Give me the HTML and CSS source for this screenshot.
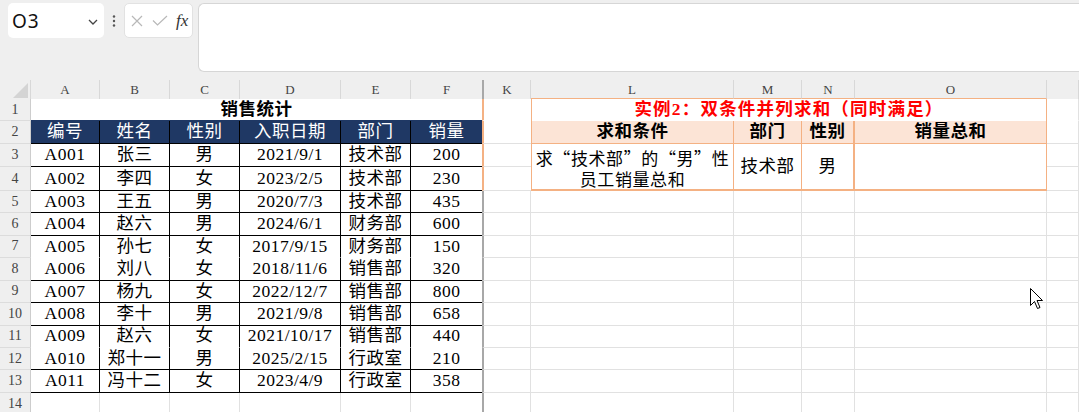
FILE: index.html
```html
<!DOCTYPE html>
<html lang="zh-CN">
<head>
    <meta charset="UTF-8">
    <title>销售统计</title>
    <link rel="stylesheet" href="styles.css">
</head>
<body>
    <div class="toolbar">
        <div class="namebox">
            <span class="ref">O3</span>
            <svg class="chev" width="10" height="6" viewBox="0 0 10 6"><path d="M1 1l4 4 4-4" fill="none" stroke="#444" stroke-width="1.3"/></svg>
        </div>
        <div class="kebab">
            <svg width="4" height="12" viewBox="0 0 4 12"><circle cx="2" cy="1.5" r="1.2" fill="#555"/><circle cx="2" cy="6" r="1.2" fill="#555"/><circle cx="2" cy="10.5" r="1.2" fill="#555"/></svg>
        </div>
        <div class="fxbox">
            <svg width="12" height="12" viewBox="0 0 12 12"><path d="M1 1l10 10M11 1L1 11" stroke="#b8b8b8" stroke-width="1.2"/></svg>
            <svg width="16" height="11" viewBox="0 0 16 11"><path d="M1 5.5l4.5 4.5L15 1" fill="none" stroke="#b8b8b8" stroke-width="1.2"/></svg>
            <span class="fx">fx</span>
        </div>
        <div class="formula"></div>
    </div>

    <table class="sheet">
        <colgroup>
            <col style="width:31px"><col style="width:69px"><col style="width:70px"><col style="width:70px">
            <col style="width:101px"><col style="width:70px"><col style="width:71px"><col style="width:49px">
            <col style="width:203px"><col style="width:68px"><col style="width:53px"><col style="width:192px">
            <col style="width:32px">
        </colgroup>
        <tr class="colhead">
            <th class="corner"><span class="tri"></span></th>
            <th>A</th><th>B</th><th>C</th><th>D</th><th>E</th><th class="f">F</th>
            <th class="k">K</th><th class="ro">L</th><th class="ro">M</th><th class="ro">N</th><th class="ro">O</th><th></th>
        </tr>
        <tr>
            <th class="rh">1</th>
            <td colspan="6" class="title">销售统计</td>
            <td class="k o nobot"></td>
            <td colspan="4" class="r-title">实例2：双条件并列求和（同时满足）</td>
            <td class="nobot"></td>
        </tr>
        <tr>
            <th class="rh">2</th>
            <td class="hd">编号</td><td class="hd">姓名</td><td class="hd">性别</td><td class="hd">入职日期</td><td class="hd">部门</td><td class="hd f">销量</td>
            <td class="k o"></td>
            <td class="r-hd first">求和条件</td><td class="r-hd">部门</td><td class="r-hd thick">性别</td><td class="r-hd">销量总和</td>
            <td></td>
        </tr>
        <tr>
            <th class="rh">3</th>
            <td class="t">A001</td><td class="t">张三</td><td class="t">男</td><td class="t">2021/9/1</td><td class="t">技术部</td><td class="t f">200</td>
            <td class="k o"></td>
            <td rowspan="2" class="r-cell first cond">求“技术部”的“男”性<br>员工销量总和</td>
            <td rowspan="2" class="r-cell">技术部</td>
            <td rowspan="2" class="r-cell thick">男</td>
            <td rowspan="2" class="r-cell"></td>
            <td></td>
        </tr>
        <tr>
            <th class="rh">4</th>
            <td class="t">A002</td><td class="t">李四</td><td class="t">女</td><td class="t">2023/2/5</td><td class="t">技术部</td><td class="t f">230</td>
            <td class="k o"></td>
            <td></td>
        </tr>
        <tr>
            <th class="rh">5</th>
            <td class="t">A003</td><td class="t">王五</td><td class="t">男</td><td class="t">2020/7/3</td><td class="t">技术部</td><td class="t f">435</td>
            <td class="k"></td><td></td><td></td><td></td><td></td><td></td>
        </tr>
        <tr>
            <th class="rh">6</th>
            <td class="t">A004</td><td class="t">赵六</td><td class="t">男</td><td class="t">2024/6/1</td><td class="t">财务部</td><td class="t f">600</td>
            <td class="k"></td><td></td><td></td><td></td><td></td><td></td>
        </tr>
        <tr>
            <th class="rh">7</th>
            <td class="t nb">A005</td><td class="t nb">孙七</td><td class="t nb">女</td><td class="t nb">2017/9/15</td><td class="t nb">财务部</td><td class="t nb f">150</td>
            <td class="k"></td><td></td><td></td><td></td><td></td><td></td>
        </tr>
        <tr>
            <th class="rh">8</th>
            <td class="t">A006</td><td class="t">刘八</td><td class="t">女</td><td class="t">2018/11/6</td><td class="t">销售部</td><td class="t f">320</td>
            <td class="k"></td><td></td><td></td><td></td><td></td><td></td>
        </tr>
        <tr>
            <th class="rh">9</th>
            <td class="t">A007</td><td class="t">杨九</td><td class="t">女</td><td class="t">2022/12/7</td><td class="t">销售部</td><td class="t f">800</td>
            <td class="k"></td><td></td><td></td><td></td><td></td><td></td>
        </tr>
        <tr>
            <th class="rh">10</th>
            <td class="t">A008</td><td class="t">李十</td><td class="t">男</td><td class="t">2021/9/8</td><td class="t">销售部</td><td class="t f">658</td>
            <td class="k"></td><td></td><td></td><td></td><td></td><td></td>
        </tr>
        <tr>
            <th class="rh">11</th>
            <td class="t nb">A009</td><td class="t nb">赵六</td><td class="t nb">女</td><td class="t nb">2021/10/17</td><td class="t nb">销售部</td><td class="t nb f">440</td>
            <td class="k"></td><td></td><td></td><td></td><td></td><td></td>
        </tr>
        <tr>
            <th class="rh">12</th>
            <td class="t">A010</td><td class="t">郑十一</td><td class="t">男</td><td class="t">2025/2/15</td><td class="t">行政室</td><td class="t f">210</td>
            <td class="k"></td><td></td><td></td><td></td><td></td><td></td>
        </tr>
        <tr>
            <th class="rh">13</th>
            <td class="t">A011</td><td class="t">冯十二</td><td class="t">女</td><td class="t">2023/4/9</td><td class="t">行政室</td><td class="t f">358</td>
            <td class="k"></td><td></td><td></td><td></td><td></td><td></td>
        </tr>
        <tr>
            <th class="rh">14</th>
            <td></td><td></td><td></td><td></td><td></td><td class="f"></td>
            <td class="k"></td><td></td><td></td><td></td><td></td><td></td>
        </tr>
    </table>

    <svg class="pointer" width="14" height="22" viewBox="0 0 14 22">
        <path d="M0.5 0.5V17.5L4.5 13.5L7.5 20.5L10 19.5L7 12.5H12.5Z" fill="#fff" stroke="#000" stroke-width="1"/>
    </svg>
</body>
</html>
```

FILE: styles.css
```css
body {
    margin: 0;
    width: 1079px;
    height: 412px;
    overflow: hidden;
    background: #fff;
    font-family: "Liberation Serif", "Noto Sans CJK SC", serif;
    color: #000;
    position: relative;
}
.toolbar {
    height: 80px;
    box-sizing: border-box;
    background: #efefef;
    display: flex;
    align-items: flex-start;
    padding: 3px 0 0 8px;
}
.namebox {
    width: 96px;
    height: 35px;
    box-sizing: border-box;
    background: #fff;
    border-radius: 5px;
    display: flex;
    align-items: center;
    justify-content: space-between;
    padding: 0 6px 0 4px;
}
.ref {
    font-family: "Noto Sans", sans-serif;
    font-size: 19px;
    color: #111;
    letter-spacing: 1px;
}
.chev {
    margin-top: 2px;
}
.kebab {
    width: 20px;
    height: 35px;
    display: flex;
    align-items: center;
    justify-content: center;
}
.fxbox {
    width: 69px;
    height: 35px;
    box-sizing: border-box;
    background: #fff;
    border: 1px solid #e2e2e2;
    border-radius: 5px;
    display: flex;
    align-items: center;
    gap: 9px;
    padding-left: 6px;
}
.fx {
    font-family: "Liberation Serif", serif;
    font-style: italic;
    font-size: 17px;
    color: #333;
    margin-left: -1px;
}
.formula {
    flex: 1;
    height: 69px;
    margin-left: 5px;
    box-sizing: border-box;
    background: #fff;
    border: 1px solid #d6d6d6;
    border-right: none;
    border-radius: 6px 0 0 6px;
}
.sheet {
    width: 1079px;
    table-layout: fixed;
    border-collapse: separate;
    border-spacing: 0;
}
.sheet tr {
    height: 22.45px;
}
.sheet td, .sheet th {
    padding: 0;
    text-align: center;
    vertical-align: middle;
    white-space: nowrap;
    overflow: hidden;
    border-right: 1px solid #e1e1e1;
    border-bottom: 1px solid #e1e1e1;
    font-size: 17.5px;
    letter-spacing: 0.5px;
    line-height: 1;
    font-weight: normal;
}
.sheet tr.colhead {
    height: 19px;
}
.colhead th {
    background: #efefef;
    border-right: 1px solid #d8d8d8;
    border-bottom: none;
    font-size: 13px;
    letter-spacing: 0;
    color: #444;
}
.colhead th.ro {
    border-bottom: 1px solid #f4b183;
}
.corner {
    position: relative;
}
.tri {
    position: absolute;
    right: 2px;
    bottom: 1px;
    width: 0;
    height: 0;
    border-left: 15px solid transparent;
    border-bottom: 15px solid #d4d4d4;
}
.sheet th.rh {
    background: #efefef;
    border-right: 1px solid #cdcdcd;
    border-bottom: 1px solid #dcdcdc;
    font-size: 14px;
    letter-spacing: 0;
    color: #444;
}
.sheet .f {
    border-right: none;
}
.sheet .k {
    border-left: 2px solid #a8a8a8;
}
.sheet .k.o {
    border-left-color: #f4b183;
    border-right: none;
}
.sheet .nobot {
    border-bottom-color: #fff;
}
.sheet .title {
    font-weight: bold;
    border-right: none;
    border-bottom: 1px solid #1f3864;
}
.sheet .hd {
    background: #1f3864;
    color: #fff;
    border-right: 1px solid #000;
    border-bottom: 1px solid #000;
}
.sheet .hd.f {
    border-right: none;
}
.sheet .t {
    border-right: 1px solid #000;
    border-bottom: 1px solid #000;
}
.sheet .t.f {
    border-right: none;
}
.sheet .t.nb {
    border-bottom-color: #fff;
}
.sheet .r-title {
    color: #f00;
    font-weight: bold;
    letter-spacing: 1.2px;
    border-left: 1px solid #f4b183;
    border-right: 1px solid #f4b183;
    border-bottom: none;
}
.sheet .r-hd {
    background: #fce4d6;
    font-weight: bold;
    border-right: 1px solid #f4b183;
    border-bottom: 1px solid #f4b183;
}
.sheet .r-cell {
    border-right: 1px solid #f4b183;
    border-bottom: 2px solid #f4b183;
    line-height: 1.1;
}
.sheet .cond {
    font-family: "Noto Sans CJK SC", sans-serif;
    font-size: 17px;
    letter-spacing: 0.6px;
    line-height: 21px;
    padding-top: 3px;
}
.sheet .first {
    border-left: 1px solid #f4b183;
}
.sheet .thick {
    border-right-width: 2px;
}
.pointer {
    position: absolute;
    left: 1030px;
    top: 288px;
}
```
